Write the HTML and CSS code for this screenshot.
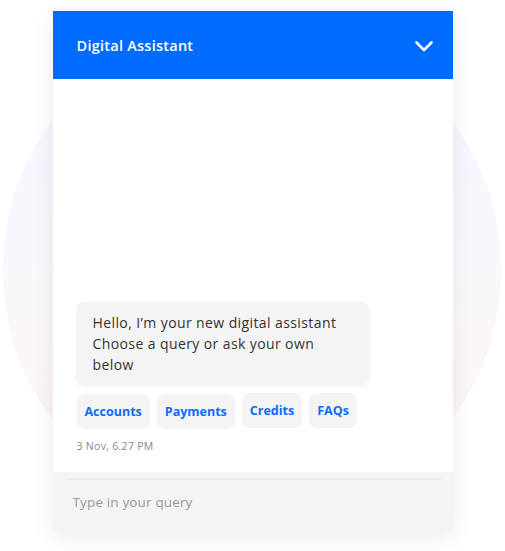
FILE: index.html
```html
<!DOCTYPE html>
<html lang="en">
<head>
    <meta charset="UTF-8">
    <meta name="viewport" content="width=device-width, initial-scale=1.0">
    <title>Digital Assistant</title>
    <link rel="stylesheet" href="styles.css">
</head>
<body>
    <div class="stage">
        <!-- Ventana del chat -->
        <div class="chat">
            <div class="chat-header">
                <span class="chat-title">Digital Assistant</span>
                <svg class="chevron" width="18" height="11" viewBox="0 0 18 11">
                    <path d="M1.5 1.5 L9 9 L16.5 1.5" fill="none" stroke="#fff" stroke-width="2.6" stroke-linecap="round" stroke-linejoin="round"/>
                </svg>
            </div>

            <div class="chat-body">
                <div class="bubble">
                    Hello, I’m your new digital assistant<br>
                    Choose a query or ask your own below
                </div>
                <div class="chips">
                    <button class="chip">Accounts</button>
                    <button class="chip">Payments</button>
                    <button class="chip chip-up">Credits</button>
                    <button class="chip chip-up">FAQs</button>
                </div>
                <p class="time">3 Nov, 6.27 PM</p>
            </div>

            <div class="chat-footer">
                <input type="text" class="query" placeholder="Type in your query">
            </div>
        </div>
    </div>
</body>
</html>
```

FILE: styles.css
```css
body {
    margin: 0;
    padding: 0;
    background: #fff;
    font-family: "Open Sans", Arial, sans-serif;
}

.stage {
    position: relative;
    padding-top: 11px;
    min-height: 540px;
}

/* Círculo decorativo del fondo */
.stage::before {
    content: "";
    position: absolute;
    left: 3px;
    top: 20px;
    width: 498px;
    height: 500px;
    border-radius: 50%;
    background: linear-gradient(180deg, #f5f3ff 0%, #faf8fc 50%, #fdf1f4 100%);
}

.chat {
    position: relative;
    width: 400px;
    margin: 0 auto;
    background: #fff;
    box-shadow: 0 6px 22px rgba(0, 0, 0, 0.08);
}

.chat-header {
    height: 68px;
    padding: 0 20px 0 24px;
    display: flex;
    align-items: center;
    justify-content: space-between;
    background: #006cff;
}

.chat-title {
    color: #fff;
    font-size: 14.5px;
    font-weight: 600;
    letter-spacing: 0.25px;
}

.chevron {
    margin-top: 2px;
}

.chat-body {
    height: 393px;
    box-sizing: border-box;
    padding: 0 20px 18px 23px;
    display: flex;
    flex-direction: column;
    justify-content: flex-end;
    align-items: flex-start;
}

.bubble {
    width: 293px;
    box-sizing: border-box;
    padding: 10px 17px 9px 17px;
    background: #f4f4f4;
    border-radius: 8px;
    box-shadow: 0 3px 4px rgba(0, 0, 0, 0.05);
    color: #333;
    font-size: 14px;
    line-height: 21px;
    letter-spacing: 0.4px;
}

.chips {
    display: flex;
    align-items: flex-start;
    gap: 7px;
    margin-top: 10px;
    margin-left: 1px;
}

.chip {
    height: 35px;
    padding: 0 8px;
    border: none;
    border-radius: 8px;
    background: #f4f4f4;
    color: #0a6cff;
    font-family: inherit;
    font-size: 12.5px;
    font-weight: 700;
    cursor: pointer;
}

.chip-up {
    margin-top: -1px;
}

.time {
    margin: 9px 0 0 1px;
    color: #888;
    font-size: 10.5px;
    line-height: 16px;
    letter-spacing: 0.3px;
}

.chat-footer {
    height: 59px;
    box-sizing: border-box;
    padding: 6px 12px 0 15px;
    background: #f4f4f4;
}

.query {
    width: 100%;
    box-sizing: border-box;
    height: 42px;
    padding: 4px 5px 0;
    border: none;
    border-top: 2px solid #ebebeb;
    background: transparent;
    font-family: inherit;
    font-size: 13.5px;
    letter-spacing: 0.15px;
    color: #333;
    outline: none;
}

.query::placeholder {
    color: #999;
}
```
